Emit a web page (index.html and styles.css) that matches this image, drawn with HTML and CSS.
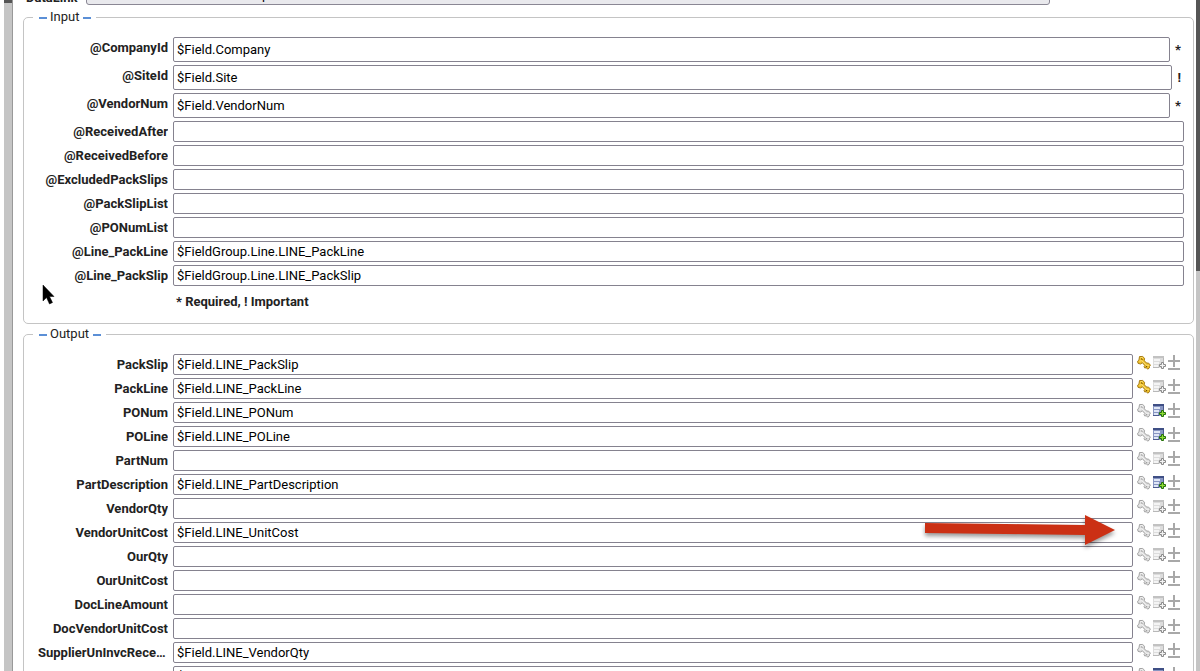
FILE: index.html
```
<!DOCTYPE html>
<html lang="en">
  <head>
    <meta charset="UTF-8" />
    <meta name="viewport" content="width=device-width, initial-scale=1.0" />
    <title>DataLink Mapping</title>
    <link rel="stylesheet" href="styles.css" />
  </head>
  <body>
    <!-- Shared icons -->
    <svg class="sprite" aria-hidden="true">
      <symbol id="icon-key" viewBox="0 0 14 15">
        <path class="key-body" d="M2.500 1.500h3.200L7.600 3.300 7.200 5.800l2.800 2.500 1.300-.4 2.200 2.300-1 1.100v1.500l-1.800 1.400-1.300-1.400-1.800.1-.5-1.500.7-1L5.400 7.800 3.500 9 1 8.300 .6 6.200 2 4.800z" />
        <path class="key-shine" d="M3.500 2.700h2.200M2.500 6.300l2.200-.7 5 4.700 2 .2" />
        <path class="key-hole" d="M4 3.700l1.500.8M8.800 12l1.400-.7" />
      </symbol>
      <symbol id="icon-list" viewBox="0 0 13 15">
        <path class="list-body" d="M0 1h11v12H0z" />
        <path class="list-head" d="M0 1h11v2H0z" />
        <path class="list-cells" d="M1 4h6v2H1zM1 7h5v2H1zM1 10h4v2H1z" />
        <path class="list-edge" d="M10 3h1v4h-1zM0 12h6v1H0z" />
        <path class="list-plus" d="M7.500 6.500h2v2h2v2h-2v2h-2v-2h-2v-2h2z" transform="translate(1 1)" />
      </symbol>
      <symbol id="icon-plus-minus" viewBox="0 0 14 15">
        <path class="pm" d="M6 0v12M0 6h12M0 14h12" />
      </symbol>
    </svg>

    <div class="app">
      <div class="scrollbar scrollbar-left"><div class="thumb"></div></div>

      <main class="content">
        <div class="datalink-row">
          <label for="datalink">DataLink</label>
          <select id="datalink">
            <option>Uninvoiced Vendor Line Receipts</option>
          </select>
        </div>

        <fieldset class="group">
          <legend>Input</legend>
          <div id="input-rows" class="rows"></div>
          <p class="hint">* Required, ! Important</p>
        </fieldset>

        <fieldset class="group">
          <legend>Output</legend>
          <div id="output-rows" class="rows"></div>
        </fieldset>
      </main>

      <div class="scrollbar scrollbar-right"><div class="thumb"></div></div>
    </div>

    <!-- Arrow pointing at the VendorUnitCost buttons -->
    <svg class="arrow" viewBox="0 0 196 40" aria-hidden="true">
      <path d="M3 11 163 13V3l30 15-30 15V23L3 21z" />
    </svg>
    <svg class="cursor" viewBox="0 0 13 21" aria-hidden="true">
      <path d="M1 1v16l3.500-3.500L7.500 20l3-1.500-3-6H12z" />
    </svg>

    <script>
      const inputs = [
        ["@CompanyId", "$Field.Company", "*"],
        ["@SiteId", "$Field.Site", "!"],
        ["@VendorNum", "$Field.VendorNum", "*"],
        ["@ReceivedAfter", ""],
        ["@ReceivedBefore", ""],
        ["@ExcludedPackSlips", ""],
        ["@PackSlipList", ""],
        ["@PONumList", ""],
        ["@Line_PackLine", "$FieldGroup.Line.LINE_PackLine"],
        ["@Line_PackSlip", "$FieldGroup.Line.LINE_PackSlip"],
      ];

      // label, value, active icon
      const outputs = [
        ["PackSlip", "$Field.LINE_PackSlip", "key"],
        ["PackLine", "$Field.LINE_PackLine", "key"],
        ["PONum", "$Field.LINE_PONum", "list"],
        ["POLine", "$Field.LINE_POLine", "list"],
        ["PartNum", ""],
        ["PartDescription", "$Field.LINE_PartDescription", "list"],
        ["VendorQty", ""],
        ["VendorUnitCost", "$Field.LINE_UnitCost"],
        ["OurQty", ""],
        ["OurUnitCost", ""],
        ["DocLineAmount", ""],
        ["DocVendorUnitCost", ""],
        ["SupplierUnInvcReceiptQty", "$Field.LINE_VendorQty"],
        ["", "$Field.LINE_Qty", "list"],
      ];

      function iconButton(name, title, active) {
        return `<button type="button" class="icon icon-${name}${active === name ? " active" : ""}" aria-label="${title}">
          <svg><use href="#icon-${name}"></use></svg>
        </button>`;
      }

      document.getElementById("input-rows").innerHTML = inputs
        .map(
          ([label, value, mark], i) => `
        <div class="row${mark ? " marked" : ""}">
          <label for="in-${i}">${label}</label>
          <input id="in-${i}" type="text" value="${value}" />
          ${mark ? `<span class="mark">${mark}</span>` : ""}
        </div>`
        )
        .join("");

      document.getElementById("output-rows").innerHTML = outputs
        .map(
          ([label, value, active], i) => `
        <div class="row">
          <label for="out-${i}">${label}</label>
          <input id="out-${i}" type="text" value="${value}" />
          <div class="actions">
            ${iconButton("key", "Key field", active)}
            ${iconButton("list", "Add to list", active)}
            ${iconButton("plus-minus", "Change sign", active)}
          </div>
        </div>`
        )
        .join("");
    </script>
  </body>
</html>
```

FILE: styles.css
```
* {
  box-sizing: border-box;
}

body {
  margin: 0;
  height: 100vh;
  overflow: hidden;
  background: white;
  color: #222;
  font-family: Roboto, Arial, sans-serif;
  font-size: 13px;
  line-height: 16px;
}

.sprite {
  position: absolute;
  width: 0;
  height: 0;
}

.app {
  display: flex;
  height: 100%;
}

/* Scrollbars */
.scrollbar {
  flex: none;
  background: #c5c5c5;
}

.scrollbar .thumb {
  background: #555;
}

.scrollbar-left {
  width: 9px;
  margin-left: 4px;
  border-right: 1px solid #999;
}

.scrollbar-left .thumb {
  height: 3px;
}

.scrollbar-right {
  width: 4px;
}

.scrollbar-right .thumb {
  height: 271px;
}

/* Content, scrolled down a little */
.content {
  flex: 1;
  min-width: 0;
  height: 100%;
  margin-top: -20px;
  padding: 0 2px 0 10px;
}

.datalink-row {
  display: flex;
  align-items: flex-end;
  gap: 9px;
  height: 25px;
  padding: 0 144px 0 3px;
}

.datalink-row label {
  font-weight: bold;
  line-height: 14px;
}

.datalink-row select {
  flex: 1;
  height: 25px;
  padding: 4px 4px 0;
  appearance: none;
  border: 1px solid #8a8794;
  border-radius: 3px;
  background: #e9e9ed;
  color: black;
  font: inherit;
}

/* Groups */
.group {
  min-width: 0;
  margin: 4px 0 0;
  padding: 12px 9px 13px 0;
  border: 1px solid #c4c4c4;
  border-radius: 5px;
}

.group + .group {
  margin-top: 2px;
}

legend {
  display: flex;
  align-items: center;
  gap: 4px;
  margin-left: 9px;
  padding: 0 5px 0 6px;
}

legend::before,
legend::after {
  content: "";
  width: 8px;
  height: 2px;
  margin-top: 2px;
  background: #5b8fd6;
}

legend::before {
  margin-right: -1px;
}

.rows {
  display: flex;
  flex-direction: column;
  gap: 3px;
}

.row {
  display: flex;
  align-items: flex-start;
}

.row label {
  flex: none;
  width: 144px;
  margin-right: 5px;
  padding-top: 3px;
  overflow: hidden;
  font-weight: bold;
  text-align: right;
  text-overflow: ellipsis;
  white-space: nowrap;
}

#output-rows label {
  padding-left: 14px;
}

.row input {
  flex: 1;
  min-width: 0;
  height: 21px;
  padding: 0 3px;
  border: 1px solid #85828f;
  border-radius: 2px;
  background: white;
  color: black;
  font: inherit;
}

.marked input {
  height: 25px;
}

.mark {
  padding: 5px 3px 0 5px;
  font-weight: bold;
}

.hint {
  margin: 8px 0 0 152px;
  font-weight: bold;
}

/* Row buttons */
.actions {
  display: flex;
  gap: 2px;
  padding-left: 4px;
  padding-right: 2px;
}

.icon {
  width: 14px;
  height: 16px;
  padding: 0;
  border: 0;
  background: none;
  cursor: pointer;
  --key-fill: #dedede;
  --key-line: #a4a4a4;
  --key-shine: #f5f5f5;
  --key-hole: #999;
  --list-fill: #dcdcdc;
  --list-head: #c2c2c2;
  --list-cell: #f4f4f4;
  --list-edge: #b8b8b8;
  --plus-fill: #f3f3f3;
  --plus-line: #8a8a8a;
}

.icon.active {
  --key-fill: #efc02a;
  --key-line: #a77d18;
  --key-shine: #fbe37c;
  --key-hole: #5f4300;
  --list-fill: #8795c2;
  --list-head: #3f4f85;
  --list-cell: #dfe6f6;
  --list-edge: #4b5a8e;
  --plus-fill: #8fdc35;
  --plus-line: #24700a;
}

.icon svg {
  display: block;
  width: 100%;
  height: 15px;
}

.key-body {
  fill: var(--key-fill);
  stroke: var(--key-line);
}

.key-shine {
  fill: none;
  stroke: var(--key-shine);
}

.key-hole {
  stroke: var(--key-hole);
}

.icon-list {
  width: 13px;
}

.list-body {
  fill: var(--list-fill);
}

.list-head {
  fill: var(--list-head);
}

.list-cells {
  fill: var(--list-cell);
}

.list-edge {
  fill: var(--list-edge);
}

.list-plus {
  fill: var(--plus-fill);
  stroke: var(--plus-line);
}

.pm {
  stroke: #a8a8a8;
  stroke-width: 2;
}

/* Overlays */
.arrow {
  position: absolute;
  top: 512px;
  left: 922px;
  width: 196px;
  height: 40px;
  fill: #cb3014;
  filter: drop-shadow(0 3px 2px rgba(0, 0, 0, 0.4));
  pointer-events: none;
}

.cursor {
  position: absolute;
  top: 284px;
  left: 42px;
  width: 13px;
  height: 21px;
  stroke: black;
  stroke-width: 0.5;
  pointer-events: none;
}
```
